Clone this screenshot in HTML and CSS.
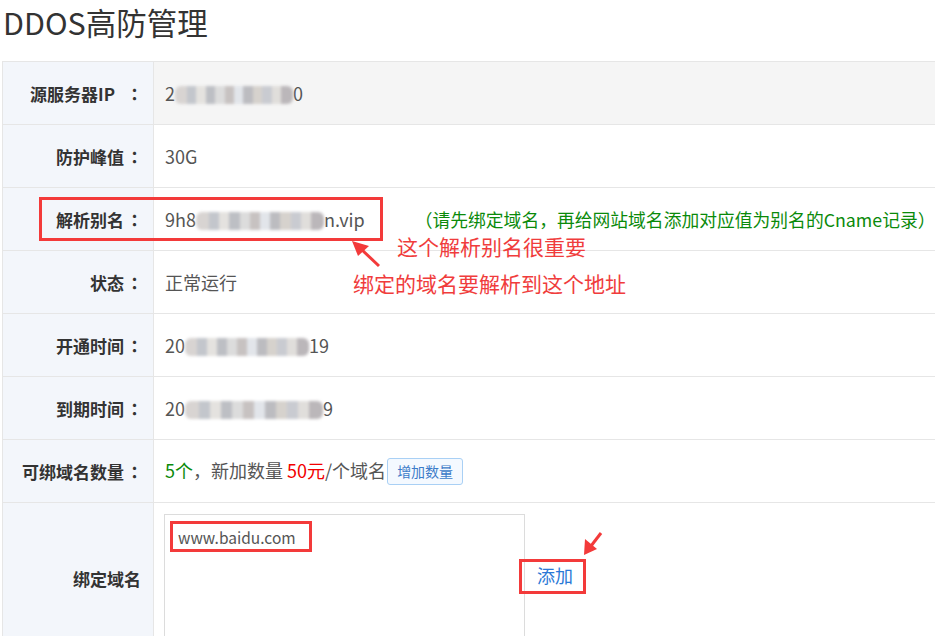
FILE: index.html
```html
<!DOCTYPE html>
<html lang="zh-CN">
<head>
<meta charset="utf-8">
<title>DDOS高防管理</title>
<link rel="stylesheet" href="styles.css">
</head>
<body>
<div class="page">
  <h1 class="title">DDOS高防管理</h1>
  <table class="info">
    <tr class="row-alt">
      <th>源服务器IP<span class="colon colon-gap">：</span></th>
      <td><span>2</span><span class="mosaic w120"></span><span>0</span></td>
    </tr>
    <tr>
      <th>防护峰值<span class="colon">：</span></th>
      <td>30G</td>
    </tr>
    <tr>
      <th>解析别名<span class="colon">：</span></th>
      <td><span>9h8</span><span class="mosaic w132"></span><span>n.vip</span><span class="tip">（请先绑定域名，再给网站域名添加对应值为别名的Cname记录）</span></td>
    </tr>
    <tr>
      <th>状态<span class="colon">：</span></th>
      <td>正常运行</td>
    </tr>
    <tr>
      <th>开通时间<span class="colon">：</span></th>
      <td><span>20</span><span class="mosaic w126"></span><span>19</span></td>
    </tr>
    <tr>
      <th>到期时间<span class="colon">：</span></th>
      <td><span>20</span><span class="mosaic w140"></span><span>9</span></td>
    </tr>
    <tr>
      <th>可绑域名数量<span class="colon">：</span></th>
      <td><span class="green">5个</span>，新加数量 <span class="red">50元</span>/个域名 <button class="btn-add">增加数量</button></td>
    </tr>
    <tr class="row-tall">
      <th class="no-colon">绑定域名</th>
      <td>
        <div class="bind">
          <div class="domains">www.baidu.com</div>
          <a class="link-add" href="#">添加</a>
        </div>
      </td>
    </tr>
  </table>

  <div class="note note-1">这个解析别名很重要</div>
  <div class="note note-2">绑定的域名要解析到这个地址</div>
  <svg class="marks" width="935" height="636" viewBox="0 0 935 636">
    <rect x="40.5" y="198.5" width="341" height="41" fill="none" stroke="#f33a3a" stroke-width="3"/>
    <rect x="171.5" y="522.5" width="139" height="28" fill="none" stroke="#f33a3a" stroke-width="3"/>
    <rect x="520.5" y="560.5" width="64" height="32" fill="none" stroke="#f33a3a" stroke-width="3"/>
    <line x1="379" y1="266" x2="361" y2="249" stroke="#f33a3a" stroke-width="3"/>
    <polygon points="352,241 369,246 358,256" fill="#f33a3a"/>
    <line x1="601" y1="533" x2="591" y2="546" stroke="#f33a3a" stroke-width="3"/>
    <polygon points="584,555 585,539 597,549" fill="#f33a3a"/>
  </svg>
</div>
</body>
</html>
```

FILE: styles.css
```css
html, body {
  margin: 0;
  padding: 0;
  background: #fff;
  overflow: hidden;
}

body {
  font-family: "Noto Sans CJK SC", "Noto Sans", sans-serif;
  color: #555;
}

.page {
  position: relative;
  width: 935px;
  height: 636px;
  padding-left: 2px;
  box-sizing: border-box;
}

.title {
  margin: 0;
  padding: 0 0 0 1px;
  height: 61px;
  font-size: 30.5px;
  font-weight: normal;
  line-height: 44px;
  color: #333;
}

.info {
  border-collapse: collapse;
  width: 960px;
  font-size: 18px;
}

.info th,
.info td {
  border: 1px solid #e6e6e6;
  height: 63px;
  padding: 0;
  box-sizing: border-box;
}

.info th {
  width: 151px;
  background: #f3f6fb;
  text-align: right;
  padding-right: 8px;
  font-weight: bold;
  color: #333;
  font-size: 17px;
  white-space: nowrap;
}

.colon {
  font-family: "Noto Sans CJK TC", sans-serif;
  display: inline-block;
  width: 21px;
  text-align: center;
}

.colon-gap {
  margin-left: 9px;
}

.info th.no-colon {
  padding-right: 12px;
}

.info td {
  padding-left: 11px;
  white-space: nowrap;
}

.row-alt td {
  background: #f5f5f5;
}

.row-tall th,
.row-tall td {
  height: 150px;
}

.row-tall td {
  vertical-align: top;
  padding-top: 11px;
  padding-left: 10px;
}

.mosaic {
  display: inline-block;
  height: 18px;
  vertical-align: -3px;
  background:
    linear-gradient(90deg,
      #d8d4d2 0 10%, #c3c6cc 10% 18%, #e4e2df 18% 26%, #bdbfc4 26% 34%,
      #dcdcdc 34% 42%, #c7c2c1 42% 50%, #e2e5ea 50% 58%, #bcbcc0 58% 66%,
      #d6d2cd 66% 74%, #c9cbd1 74% 82%, #e0dedb 82% 90%, #bbb7ba 90% 100%);
  filter: blur(1.5px);
  border-radius: 6px;
}

.w120 { width: 118px; }
.w132 { width: 128px; }
.w126 { width: 124px; }
.w140 { width: 138px; }

.tip {
  margin-left: 50px;
  color: #0a8a0a;
  font-size: 17.8px;
}

.green { color: #0a8a0a; }
.red { color: #f20000; }

.btn-add {
  font-family: inherit;
  font-size: 14px;
  color: #3d7cc9;
  background: #f4f9ff;
  border: 1px solid #a9d0f5;
  border-radius: 3px;
  padding: 0 9px;
  height: 27px;
  margin-left: -3px;
  vertical-align: 1px;
}

.bind {
  display: flex;
  align-items: flex-start;
}

.domains {
  width: 361px;
  height: 140px;
  border: 1px solid #dcdcdc;
  box-sizing: border-box;
  padding: 11px 0 0 13px;
  font-size: 15.5px;
  color: #555;
}

.link-add {
  margin: 48px 0 0 12px;
  font-size: 18px;
  color: #2a78d6;
  text-decoration: none;
}

.note {
  position: absolute;
  color: #f03c3c;
  font-size: 21px;
  line-height: 24px;
  white-space: nowrap;
}

.note-1 { left: 397px; top: 234px; }
.note-2 { left: 353px; top: 271px; }

.marks {
  position: absolute;
  left: 0;
  top: 0;
  pointer-events: none;
}
```
